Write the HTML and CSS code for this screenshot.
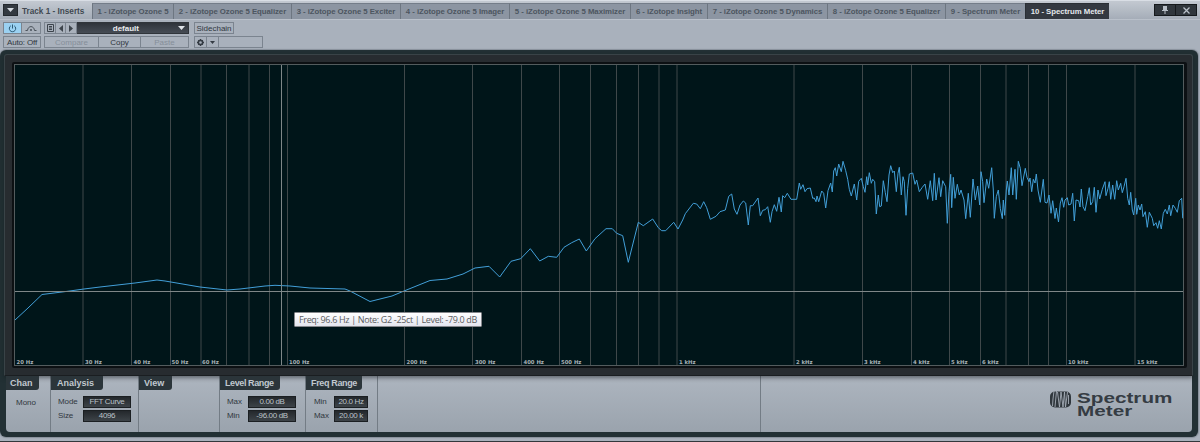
FILE: index.html
```html
<!DOCTYPE html>
<html lang="en">
<head>
    <meta charset="UTF-8">
    <meta name="viewport" content="width=device-width, initial-scale=1.0">
    <title>Spectrum Meter</title>
    <link rel="stylesheet" href="styles.css">
</head>
<body>
    <div class="window">
        <div class="tab-bar">
            <button class="menu-btn"><svg width="7" height="4"><path d="M0 0h7L3.500 4z" fill="#d5dae0"/></svg></button>
            <div class="track"><span>Track 1 - Inserts</span></div>
            <div class="tabs">
                <div class="tab">1 - iZotope Ozone 5</div>
                <div class="tab">2 - iZotope Ozone 5 Equalizer</div>
                <div class="tab">3 - iZotope Ozone 5 Exciter</div>
                <div class="tab">4 - iZotope Ozone 5 Imager</div>
                <div class="tab">5 - iZotope Ozone 5 Maximizer</div>
                <div class="tab">6 - iZotope Insight</div>
                <div class="tab">7 - iZotope Ozone 5 Dynamics</div>
                <div class="tab">8 - iZotope Ozone 5 Equalizer</div>
                <div class="tab">9 - Spectrum Meter</div>
                <div class="tab active">10 - Spectrum Meter</div>
            </div>
            <div class="window-btns">
                <button><svg width="8" height="8"><path d="M2 0h4v4h1v1H4.500v3h-1V5H1V4h1z" fill="#b9c0c8"/></svg></button>
                <button><svg width="7" height="7"><path d="M.5.5l6 6M6.500.5l-6 6" stroke="#b9c0c8" stroke-width="1.300"/></svg></button>
            </div>
        </div>

        <div class="toolbar">
            <div class="group power">
                <button class="cell on"><svg width="9" height="9"><path d="M2.800 1.800a3.200 3.200 0 1 0 3.400 0M4.500.5v4" fill="none" stroke="#2c5a75"/></svg></button>
                <button class="cell"><svg width="12" height="7"><path d="M.5 5.500h2C3 .3 9 .3 9.500 5.500h2" fill="none" stroke="#4a525b"/><circle cx="6" cy="5" r="1" fill="#4a525b"/></svg></button>
                <button class="cell auto">Auto: Off</button>
            </div>
            <div class="group preset">
                <button class="cell"><svg width="7" height="8"><path d="M.5.5h6v7h-6zM2 2.500h3M2 4h3M2 5.500h3" fill="none" stroke="#3d444c"/></svg></button>
                <button class="cell"><svg width="4" height="7"><path d="M4 0v7L0 3.500z" fill="#3d444c"/></svg></button>
                <button class="cell"><svg width="4" height="7"><path d="M0 0v7l4-3.500z" fill="#3d444c"/></svg></button>
                <button class="cell select"><span>default</span><svg width="7" height="4"><path d="M0 0h7L3.500 4z" fill="#dfe3e8"/></svg></button>
                <div class="actions">
                    <button class="cell off">Compare</button>
                    <button class="cell">Copy</button>
                    <button class="cell off">Paste</button>
                </div>
            </div>
            <div class="group side">
                <button class="cell sidechain">Sidechain</button>
                <button class="cell"><svg width="7" height="7"><circle cx="3.500" cy="3.500" r="2.200" fill="none" stroke="#343b43" stroke-width="1.700"/><path d="M3.500 0v1M3.500 6v1M0 3.500h1M6 3.500h1M1 1l.7.7M5.300 5.300L6 6M6 1l-.7.7M1.700 5.300L1 6" stroke="#343b43"/></svg></button>
                <button class="cell"><svg width="5" height="3"><path d="M0 0h5L2.500 3z" fill="#343b43"/></svg></button>
                <div class="cell"></div>
            </div>
        </div>

        <div class="plugin">
            <div class="bezel">
                <div class="screen">
                    <svg class="plot" width="1170" height="302" viewBox="14 64 1170 302">
                        <!-- frequency grid, log scale -->
                        <path class="grid" d="M83 64v302M131.500 64v302M170.500 64v302M201 64v302M226.500 64v302M249 64v302M269.500 64v302M287.500 64v302M404.500 64v302M472.500 64v302M521.500 64v302M559.500 64v302M590.500 64v302M616.500 64v302M638.500 64v302M659 64v302M677 64v302M794 64v302M862.500 64v302M911.500 64v302M949.500 64v302M980.500 64v302M1006 64v302M1028.500 64v302M1048.500 64v302M1066.500 64v302M1135 64v302"/>
                        <!-- spectrum curve -->
                        <polyline class="curve" points="15,320 28,308 42,294.500 66,291.500 84,289 100,287 135,283 157,280 165,281 200,287 227,290 240,289 265,286 275,285.300 290,286 310,288 345,289 350,291 370,301.500 392,296 404,291 430,280.500 447,279 463,274 475,268 489,266.300 499.700,277 511,261.300 520.700,258.700 530.300,248.700 539.700,261 548.300,256.300 556.700,257.300 564,247.300 571.700,242.700 579.300,239 586.300,251 595,238.700 606,228.700 612.300,228.700 616.700,233.300 622.700,235.700 628.300,262.300 638.300,222.300 643.300,225.700 652.700,219 658.300,227.700 661.700,230.700 665.700,230.700 673.700,222.300 678,229 682.700,220 685.300,213.700 693.300,203.300 696.700,204 700.300,208.700 703.700,201.700 706.700,207.700 710.300,219.300 716,216.300 720,211.700 725.300,210 728.700,196.300 731.700,194 734.300,209 737,214.300 740,205 743.300,201 745.700,203 748.300,225 750.300,205.700 752.700,205.700 758,198 760.300,215.700 762.700,210.300 765.300,209.700 767.700,206.700 770.300,222.300 772,211.700 774.300,204.700 776.700,211.300 779,197.300 781.300,212 782.700,195.700 784.700,197.700 787.300,193.300 791,199.300 796.700,199.300 799.300,183 800.700,189.300 803,184.700 805,191.700 807,188.700 810.300,188 812.700,198.300 814.300,198 816,201.700 817,196 818.700,201.700 821.700,191 823.700,193.300 825.700,208 828,190.700 830.700,183 832.300,192 833.700,171 835.300,167.700 836.700,176 838.700,164 841.300,171.700 843,161.300 845.700,170.700 847.700,179.300 849.300,189.300 851.300,196 854.300,184 856.700,200 858.700,181.300 861.300,178.300 863.300,186.700 865,192.300 866.700,176.700 867.700,185 869.300,172.700 871.300,183.300 872.700,179.300 874.700,181.700 876.300,214 878.300,195 879.700,206.700 881.300,206 883.300,180.700 885.300,192.700 887,201.700 889,175 890.700,165.700 892.700,172.700 894.300,171 896.300,191.700 898,173.300 899.300,167.300 901.300,195 903,176.700 904.300,181.700 906,215.300 907.700,188.300 909.300,174 912.700,173 915,184.300 916.700,180 919.300,191.700 922.300,187.300 925,184 927.700,199.300 930.300,180.700 932.700,200.700 934.300,173.300 936,200 939,177.700 940.700,196.700 942.700,180.700 945.700,186.700 947.300,223.300 949,191.700 950.700,174.300 951.700,207.700 953.300,177.300 955,198.300 957.300,184.300 959.300,195 961,190 964,200 965.700,218.700 968.300,193.300 970.300,217.300 973,179 975.300,200 977.700,186 979.700,205 981,171.700 982.700,181.700 984,202.700 986.700,179 988.700,188.300 991.700,167.700 993.300,190 994.300,218.300 996.300,196.700 998.300,190 1000.300,208.300 1002.300,218.700 1003.300,200 1004.700,215.300 1006.300,190 1007.300,181 1009,195 1011.300,167.700 1012.700,195 1015,169.300 1016.300,199.300 1018.300,161.300 1020.300,168.300 1022,185.700 1025.300,168.300 1027,177.300 1029,181.700 1030,178 1031.700,191.700 1033.300,179.300 1035,183 1036.300,174 1038,190 1040.300,202.300 1043.300,179.300 1045,202.300 1047,203 1049,195 1051,213.300 1052.700,200.700 1055,218.500 1056.300,208 1058.500,222 1060.300,203 1062,197.700 1063.700,207.300 1065,200 1067.300,197.700 1068.700,205 1071,204 1072.700,193.300 1074.300,221 1076,200 1078.700,200.700 1080,207 1081.300,189 1083,206.700 1085,210.700 1087.700,196.700 1089.300,187.700 1090.700,205 1092.700,201.700 1094.300,187.300 1096,212.300 1098,190 1099.700,199 1102.300,189.300 1105,181.700 1106,195.700 1108,188.300 1109.300,181.700 1110.700,199.300 1112.700,185 1114.700,199.300 1116.700,180.700 1118.300,190 1120.700,183.300 1122.300,192.700 1124,186.700 1126,178.300 1127.700,198.300 1129.300,205 1130.700,192.300 1132.300,210 1133.700,215 1135.700,198.300 1136.700,214.300 1138.300,205 1140,210 1141.700,204 1143,216.700 1145.300,211.700 1147.300,227.300 1149.300,212.300 1152.300,218.300 1153.700,225.700 1156,222.700 1157.700,228.300 1159.300,220.700 1161.300,229 1163.300,213.300 1165.300,209.300 1167.300,214 1169.300,205 1170.700,215.700 1173,205 1175.300,208.300 1177.300,212.300 1179.300,200.700 1181.700,198.300 1182.700,218.300"/>
                        <!-- crosshair -->
                        <path class="cross" d="M281.500 64v302M14 291.500h1170"/>
                        <rect class="edge" x="14.500" y="64.500" width="1169" height="301"/>
                        <g class="freq">
                            <text x="16.500" y="363.500">20 Hz</text>
                            <text x="85" y="363.500">30 Hz</text>
                            <text x="133.500" y="363.500">40 Hz</text>
                            <text x="171.500" y="363.500">50 Hz</text>
                            <text x="202" y="363.500">60 Hz</text>
                            <text x="289" y="363.500">100 Hz</text>
                            <text x="406.500" y="363.500">200 Hz</text>
                            <text x="475" y="363.500">300 Hz</text>
                            <text x="523.500" y="363.500">400 Hz</text>
                            <text x="561" y="363.500">500 Hz</text>
                            <text x="679" y="363.500">1 kHz</text>
                            <text x="796" y="363.500">2 kHz</text>
                            <text x="864" y="363.500">3 kHz</text>
                            <text x="913" y="363.500">4 kHz</text>
                            <text x="951" y="363.500">5 kHz</text>
                            <text x="982" y="363.500">6 kHz</text>
                            <text x="1068" y="363.500">10 kHz</text>
                            <text x="1137" y="363.500">15 kHz</text>
                        </g>
                    </svg>
                    <div class="tooltip">Freq: 96.6 Hz | Note: G2 -25ct | Level: -79.0 dB</div>
                </div>
            </div>

            <div class="controls">
                <section class="chan">
                    <h2>Chan</h2>
                    <p>Mono</p>
                </section>
                <section class="analysis">
                    <h2>Analysis</h2>
                    <div class="fields">
                        <label>Mode</label><output>FFT Curve</output>
                        <label>Size</label><output>4096</output>
                    </div>
                </section>
                <section class="view">
                    <h2>View</h2>
                </section>
                <section class="level">
                    <h2>Level Range</h2>
                    <div class="fields">
                        <label>Max</label><output>0.00 dB</output>
                        <label>Min</label><output>-96.00 dB</output>
                    </div>
                </section>
                <section class="range">
                    <h2>Freq Range</h2>
                    <div class="fields">
                        <label>Min</label><output>20.0 Hz</output>
                        <label>Max</label><output>20.00 k</output>
                    </div>
                </section>
                <section></section>
                <section class="brand">
                    <svg width="21" height="17" viewBox="0 0 21 17">
                        <rect x="0" y="0.500" width="21" height="16" rx="5" fill="#30373d"/>
                        <path d="M4 0L3 8l-.5 7M6.500 0L5 16M7.500 1l2 15L11 1l2 15L14.500 1l1 15L17.500 1M18.500 4v9" fill="none" stroke="#a5adb7" stroke-width="0.900"/>
                    </svg>
                    <div class="name">
                        <div>Spectrum</div>
                        <div>Meter</div>
                    </div>
                </section>
            </div>
        </div>
    </div>
</body>
</html>
```
FILE: styles.css
```css
* {
    box-sizing: border-box;
}

body {
    margin: 0;
    font-family: "Liberation Sans", Arial, sans-serif;
    font-size: 8px;
    color: #30373e;
    background-color: #a9b1bc;
}

button {
    font: inherit;
    color: inherit;
    border: none;
    padding: 0;
    background: none;
}

svg {
    display: block;
    flex: none;
}

.window {
    width: 1200px;
    height: 442px;
    background-color: #a9b1bc;
    border-bottom: 1px solid #33383c;
    overflow: hidden;
}

/* tabs */
.tab-bar {
    display: flex;
    height: 20px;
    padding-top: 2px;
    border-top: 1px solid #d9dee5;
    border-bottom: 1px solid #b9c0ca;
    background: linear-gradient(#c3c9d1, #a5adb8);
}

.menu-btn {
    display: flex;
    align-items: center;
    justify-content: center;
    width: 15px;
    height: 12px;
    margin: 1px 0 0 3px;
    background-color: #343a41;
    border: 1px solid #24292e;
}

.track {
    width: 74px;
    padding-left: 4px;
    font-size: 8.2px;
    font-weight: bold;
    line-height: 17px;
    color: #414951;
    white-space: nowrap;
}

.tabs {
    display: grid;
    grid-template-columns: 81px 118px 109px 109px 121px 77px 120px 118px 80px 84px;
    height: 16px;
}

.tab {
    border-top: 1px solid #747d89;
    border-left: 1px solid #6d7681;
    background-color: #8c95a2;
    color: #4d5660;
    font-size: 7.8px;
    font-weight: bold;
    line-height: 15px;
    letter-spacing: -0.05px;
    text-align: center;
    white-space: nowrap;
}

.tab.active {
    background-color: #343941;
    border-color: #2a2f35;
    color: #e4e8ec;
}

.window-btns {
    display: flex;
    gap: 1px;
    height: 12px;
    margin: 1px 0 0 45px;
    padding: 1px;
    background-color: #15191c;
}

.window-btns button {
    display: flex;
    align-items: center;
    justify-content: center;
    width: 20px;
    background-color: #30363c;
}

/* toolbar */
.toolbar {
    display: flex;
    height: 30px;
    padding: 2px 3px 0;
}

.group {
    display: grid;
    grid-template-rows: 12px 12px;
    row-gap: 2px;
}

.power {
    grid-template-columns: 19px 19px;
    margin-right: 3px;
}

.preset {
    grid-template-columns: 12px 10px 11px 112px;
    margin-right: 5px;
}

.side {
    grid-template-columns: 13px 12px 44px;
}

.cell {
    display: flex;
    align-items: center;
    justify-content: center;
    border: 1px solid #7b848f;
    white-space: nowrap;
}

.cell + .cell {
    border-left-width: 0;
}

.cell.on {
    background-color: #9bd1f2;
}

.cell.auto {
    grid-column: 1 / 3;
    border-left-width: 1px;
    letter-spacing: -0.15px;
}

.cell.select {
    justify-content: flex-end;
    gap: 39px;
    padding-right: 3px;
    background: linear-gradient(#2f343b, #464c55);
    border-color: #30353b;
    color: #e9ecef;
    font-weight: bold;
}

.actions {
    grid-column: 1 / 5;
    display: grid;
    grid-template-columns: 55px 42px 48px;
    letter-spacing: -0.15px;
}

.cell.off {
    color: #858e99;
}

.cell.sidechain {
    grid-column: 1 / 4;
    width: 40px;
}

.sidechain + .cell {
    border-left-width: 1px;
}

/* plugin body */
.plugin {
    width: 1198px;
    height: 387px;
    padding: 4px 5px 5px 4px;
    background-color: #223034;
    border-radius: 6px;
    box-shadow: 0 0 1px 1px #87909a;
}

.bezel {
    position: relative;
    height: 322px;
    padding: 7px 0 0 7px;
    background-color: #272c30;
    border: 1px solid #394347;
    border-bottom-color: #1a1e21;
    border-radius: 3px 3px 0 0;
    box-shadow: 0 2px 4px rgba(20, 25, 30, 0.5);
}

.screen {
    position: relative;
    width: 1175px;
    height: 306px;
    padding: 2px;
    background-color: #0c1013;
    border-radius: 2px;
}

.plot {
    background-color: #001519;
}

.grid {
    fill: none;
    stroke: #3f484a;
}

.cross {
    fill: none;
    stroke: #7f8788;
}

.edge {
    fill: none;
    stroke: #535c5e;
}

.curve {
    fill: none;
    stroke: #429fd8;
}

.freq {
    fill: #a9b2b6;
    font: bold 5.3px "DejaVu Sans", sans-serif;
}

.tooltip {
    position: absolute;
    left: 282px;
    top: 250px;
    width: 188px;
    height: 15px;
    border: 1px solid #85878c;
    border-radius: 1px;
    background: linear-gradient(#ffffff, #e4e5ee);
    color: #5b5c60;
    font: 9px/13px "Open Sans", sans-serif;
    letter-spacing: -0.34px;
    text-align: center;
    white-space: nowrap;
}

/* bottom controls */
.controls {
    display: grid;
    grid-template-columns: 44px 88px 81px 86px 72px 383px 432px;
    height: 56px;
    margin: 0 1px 0 2px;
    background: linear-gradient(#adb5bf, #9aa3ad);
    border-radius: 0 0 4px 4px;
}

.controls section + section {
    border-left: 1px solid #737c85;
}

.controls h2 {
    position: relative;
    height: 14px;
    margin: 0;
    padding: 0 5px;
    background-color: #2b353a;
    border-radius: 0 0 3px 0;
    color: #c1c8cf;
    font-size: 9px;
    line-height: 14px;
    white-space: nowrap;
}

.controls .chan h2 {
    width: 33px;
    padding: 0 4px;
}

.controls .analysis h2 {
    width: 52px;
    padding: 0 6px;
}

.controls .view h2 {
    width: 33px;
}

.controls .level h2 {
    width: 60px;
    letter-spacing: -0.4px;
}

.controls .range h2 {
    width: 56px;
    letter-spacing: -0.35px;
}

.controls p {
    margin: 7px 0 0 10px;
    line-height: 11px;
}

.fields {
    display: grid;
    grid-template-columns: 25px 48px;
    grid-auto-rows: 12px;
    row-gap: 2px;
    padding: 6px 0 0 7px;
    line-height: 12px;
    letter-spacing: -0.1px;
}

.level .fields {
    grid-template-columns: 21px 48px;
}

.range .fields {
    grid-template-columns: 20px 34px;
    padding-left: 8px;
}

.fields output {
    background: linear-gradient(#24282c, #3d4348);
    border: 1px solid #1b1f22;
    color: #bcc3c9;
    line-height: 10px;
    letter-spacing: -0.35px;
    text-align: center;
    white-space: nowrap;
}

.brand {
    display: flex;
    gap: 6px;
    padding: 15px 0 0 289px;
}

.name {
    font-size: 15px;
    font-weight: bold;
    line-height: 13px;
    color: #353c43;
    transform: scaleX(1.38);
    transform-origin: left;
}
```
